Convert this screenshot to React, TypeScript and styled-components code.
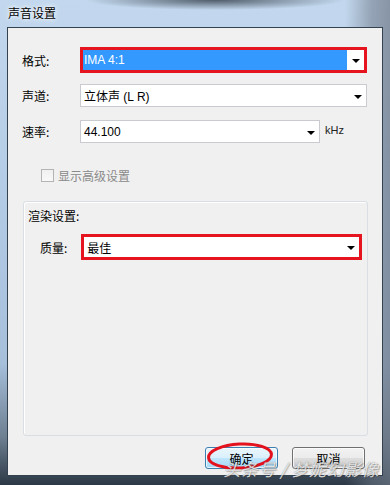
import styled, {createGlobalStyle} from "styled-components";

const GlobalStyle = createGlobalStyle`
  html, body {
    margin: 0;
    padding: 0;
  }

  body {
    font-family: "Liberation Sans", "Noto Sans CJK SC", sans-serif;
    font-size: 12px;
    color: #000;
  }
`

const Window = styled.div`
  position: relative;
  width: 390px;
  height: 485px;
  overflow: hidden;
  display: flex;
  flex-direction: column;
  background: radial-gradient(ellipse 130px 10px at 215px 0px, rgba(40, 50, 60, 0.75), rgba(40, 50, 60, 0) 100%),
  linear-gradient(to right, rgba(0, 0, 0, 0) 0, rgba(0, 0, 0, 0) 345px, rgba(110, 120, 135, 0.55) 372px, rgba(110, 120, 135, 0.7) 390px),
  linear-gradient(to bottom, #c3d8ee 0%, #b3cbe5 40%, #a6bfdb 75%, #6e8092 90%, #2c3845 100%);
`

const TitleBar = styled.div`
  height: 27px;
  flex: none;
  display: flex;
  align-items: center;
  padding: 0 0 2px 8px;
  box-sizing: border-box;
  font-family: "Noto Sans CJK SC", sans-serif;
  font-size: 12px;
  text-shadow: 0 0 6px rgba(255, 255, 255, 0.95), 0 0 3px rgba(255, 255, 255, 0.9);
`

const Client = styled.div`
  flex: 1;
  margin: 0 7px 9px 7px;
  border: 1px solid #34414f;
  background: #f0f0f0;
  display: flex;
  flex-direction: column;
  padding: 19px 0 0 0;
`

const Form = styled.div`
  display: flex;
  flex-direction: column;
  gap: 11px;
  padding-left: 14px;
`

const Row = styled.div<{ $labelWidth?: number }>`
  display: grid;
  grid-template-columns: ${p => p.$labelWidth || 58}px auto auto 1fr;
  align-items: center;
  height: 25px;
`

const Label = styled.div`
  font-family: "Noto Sans CJK SC", sans-serif;
  font-size: 12px;
`

const Select = styled.div<{ $width: number; $marked?: boolean }>`
  width: ${p => p.$width}px;
  height: ${p => p.$marked ? 26 : 23}px;
  box-sizing: border-box;
  display: flex;
  align-items: stretch;
  background: #fff;
  border: ${p => p.$marked ? "3px solid #e5141f" : "1px solid #c9cbd0"};
  padding: ${p => p.$marked ? "0" : "0 0 0 3px"};
`

const Value = styled.div<{ $selected?: boolean }>`
  flex: 1;
  display: flex;
  align-items: center;
  padding-left: ${p => p.$selected ? 1 : 0}px;
  background: ${p => p.$selected ? "#3399ff" : "transparent"};
  color: ${p => p.$selected ? "#fff" : "#000"};
  font-family: "Liberation Sans", "Noto Sans CJK SC", sans-serif;
  font-size: 12px;
`

const Arrow = styled.div`
  width: 17px;
  flex: none;
  display: flex;
  align-items: center;
  justify-content: center;

  &::after {
    content: "";
    border-left: 4px solid transparent;
    border-right: 4px solid transparent;
    border-top: 4px solid #000;
    margin-top: 2px;
  }
`

const Unit = styled.div`
  margin-left: 5px;
  font-family: "Liberation Sans", sans-serif;
  font-size: 11px;
  color: #222;
  padding-bottom: 4px;
`

const CheckRow = styled.div`
  display: flex;
  align-items: center;
  gap: 4px;
  margin: 23px 0 0 33px;
  font-family: "Noto Sans CJK SC", sans-serif;
  color: #8a8a8a;
`

const Check = styled.span`
  width: 13px;
  height: 13px;
  box-sizing: border-box;
  border: 1px solid #b4b4b4;
  background: linear-gradient(#f0f0f0, #f8f8f8);
`

const Group = styled.div`
  margin: 17px 0 0 15px;
  width: 345px;
  height: 235px;
  box-sizing: border-box;
  border: 1px solid #d8dee3;
  border-radius: 3px;
  padding: 6px 0 0 4px;
  display: flex;
  flex-direction: column;
  box-shadow: inset 1px 1px 0 #fff;
`

const GroupTitle = styled.div`
  font-family: "Noto Sans CJK SC", sans-serif;
  height: 15px;
  line-height: 15px;
`

const GroupBody = styled.div`
  margin: 11px 0 0 12px;
`

const Buttons = styled.div`
  display: flex;
  justify-content: flex-end;
  gap: 14px;
  margin: 11px 17px 0 0;
`

const ButtonWrap = styled.div`
  position: relative;
`

const Button = styled.div<{ $default?: boolean }>`
  width: 73px;
  height: 22px;
  box-sizing: border-box;
  border-radius: 3px;
  border: 1px solid ${p => p.$default ? "#3c7fb1" : "#707070"};
  background: ${p => p.$default
          ? "linear-gradient(#eaf6fd 0%, #d9f0fc 50%, #bee6fd 51%, #a7d9f5 100%)"
          : "linear-gradient(#f2f2f2 0%, #ebebeb 50%, #dddddd 51%, #cfcfcf 100%)"};
  box-shadow: inset 0 0 0 1px rgba(255, 255, 255, 0.7);
  display: flex;
  align-items: center;
  justify-content: center;
  font-family: "Noto Sans CJK SC", sans-serif;
  font-size: 12px;
`

const Circle = styled.svg`
  position: absolute;
  left: 1px;
  top: -6px;
  pointer-events: none;
`

const Watermark = styled.div`
  position: absolute;
  right: 11px;
  bottom: 4px;
  font-family: "Noto Sans CJK SC", sans-serif;
  font-size: 17px;
  font-style: italic;
  color: rgba(255, 255, 255, 0.8);
  text-shadow: 0 0 1px rgba(60, 60, 60, 0.6), 1px 1px 1px rgba(60, 60, 60, 0.35);
  letter-spacing: 0.5px;
  pointer-events: none;
`

export default function App() {
    return (
        <Window>
            <GlobalStyle/>
            <TitleBar>声音设置</TitleBar>
            <Client>
                <Form>
                    <Row>
                        <Label>格式:</Label>
                        <Select $width={287} $marked>
                            <Value $selected>IMA 4:1</Value>
                            <Arrow/>
                        </Select>
                    </Row>
                    <Row>
                        <Label>声道:</Label>
                        <Select $width={287}>
                            <Value>立体声 (L R)</Value>
                            <Arrow/>
                        </Select>
                    </Row>
                    <Row>
                        <Label>速率:</Label>
                        <Select $width={240}>
                            <Value>44.100</Value>
                            <Arrow/>
                        </Select>
                        <Unit>kHz</Unit>
                    </Row>
                </Form>
                <CheckRow>
                    <Check/>
                    显示高级设置
                </CheckRow>
                <Group>
                    <GroupTitle>渲染设置:</GroupTitle>
                    <GroupBody>
                        <Row $labelWidth={41}>
                            <Label>质量:</Label>
                            <Select $width={281} $marked>
                                <Value>&nbsp;最佳</Value>
                                <Arrow/>
                            </Select>
                        </Row>
                    </GroupBody>
                </Group>
                <Buttons>
                    <ButtonWrap>
                        <Button $default>确定</Button>
                        <Circle width="68" height="30" viewBox="0 0 68 30">
                            <ellipse cx="34" cy="15" rx="31.5" ry="12" fill="none" stroke="#e3121c" strokeWidth="3"
                                     transform="rotate(-3 34 15)"/>
                        </Circle>
                    </ButtonWrap>
                    <ButtonWrap>
                        <Button>取消</Button>
                    </ButtonWrap>
                </Buttons>
            </Client>
            <Watermark>头条号 / 梦妮幻影像</Watermark>
        </Window>
    )
}
